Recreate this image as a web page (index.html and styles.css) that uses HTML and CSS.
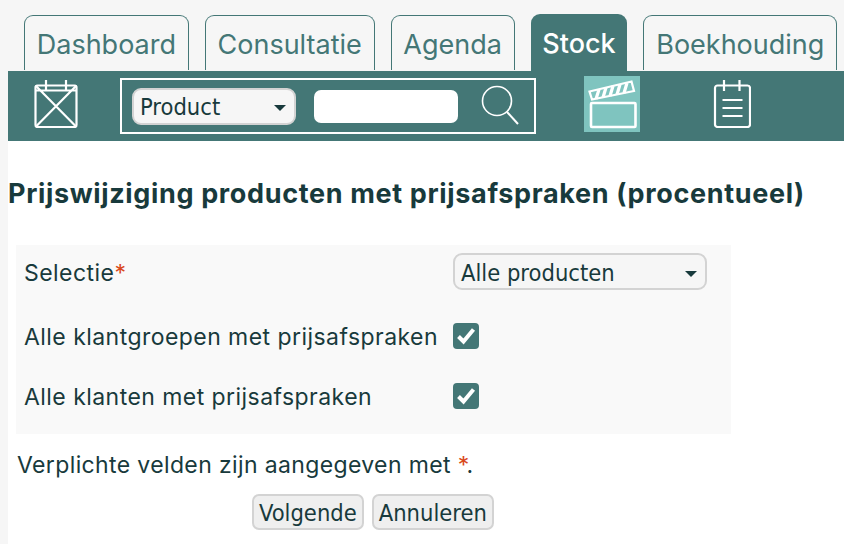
FILE: index.html
```html
<!DOCTYPE html>
<html lang="nl">
<head>
<meta charset="utf-8">
<title>Prijswijziging</title>
<link rel="stylesheet" href="styles.css">
</head>
<body>
<nav class="tabs">
  <a class="tab">Dashboard</a>
  <a class="tab">Consultatie</a>
  <a class="tab">Agenda</a>
  <a class="tab active">Stock</a>
  <a class="tab">Boekhouding</a>
</nav>
<div class="bar">
  <svg class="ico-cal" width="44" height="48" viewBox="0 0 44 48" fill="none" stroke="#fff" stroke-width="2.2">
    <rect x="1.5" y="5.500" width="41" height="41.500" rx="2"/>
    <path d="M12 0v10M32 0v10M1.500 10.500h41M1.500 5.500l41 41.500M42.500 5.500l-41 41.500"/>
  </svg>
  <div class="search">
    <div class="pick pick-bar"><span>Product</span><i class="caret"></i></div>
    <div class="field"></div>
    <svg class="ico-search" width="38" height="42" viewBox="0 0 38 42" fill="none" stroke="#fff" stroke-width="1.600">
      <circle cx="16" cy="16" r="14.500"/>
      <path d="M26 27l11 12" stroke-width="2"/>
    </svg>
  </div>
  <div class="tile">
    <svg width="56" height="56" viewBox="0 0 56 56" fill="none" stroke="#fff" stroke-width="2.600">
      <rect x="7" y="27" width="44.500" height="24" rx="1"/>
      <path d="M5.500 15.500L47.500 5.500l2.500 9.500-42 8.500z" stroke-width="2.200"/>
      <path d="M12 23l3-9.500M19 21.500l3-10M26 20l3-10M33 18.500l3-10M40 17l3-10" stroke-width="3.200"/>
    </svg>
  </div>
  <svg class="ico-note" width="38" height="48" viewBox="0 0 38 48" fill="none" stroke="#fff" stroke-width="2.200">
    <rect x="2" y="5.500" width="35" height="41.500" rx="2.500"/>
    <path d="M11 0v11M26.500 0v11M9.500 20h20M9.500 28h20M9.500 36h20"/>
  </svg>
</div>
<main class="content">
  <h1 class="title">Prijswijziging producten met prijsafspraken (procentueel)</h1>
  <div class="form">
    <div class="row row-first">
      <div class="label">Selectie<span class="req">*</span></div>
      <div class="pick pick-form"><span>Alle producten</span><i class="caret"></i></div>
    </div>
    <div class="row row-second">
      <div class="label">Alle klantgroepen met prijsafspraken</div>
      <div class="check"><svg width="20" height="18" viewBox="0 0 20 18" fill="none" stroke="#fff" stroke-width="4"><path d="M2.500 9.500l5 5L17.500 2.500"/></svg></div>
    </div>
    <div class="row row-third">
      <div class="label">Alle klanten met prijsafspraken</div>
      <div class="check"><svg width="20" height="18" viewBox="0 0 20 18" fill="none" stroke="#fff" stroke-width="4"><path d="M2.500 9.500l5 5L17.500 2.500"/></svg></div>
    </div>
  </div>
  <p class="note">Verplichte velden zijn aangegeven met <span class="req">*</span>.</p>
  <div class="actions">
    <button class="btn" type="button">Volgende</button>
    <button class="btn" type="button">Annuleren</button>
  </div>
</main>
</body>
</html>
```
FILE: styles.css
```css
* { box-sizing: border-box; }
html, body { margin: 0; padding: 0; }
body {
  width: 844px;
  height: 544px;
  overflow: hidden;
  background: #f6f6f6;
  font-family: Inter, "Liberation Sans", sans-serif;
  color: #183a3c;
}
.tabs {
  display: flex;
  align-items: flex-end;
  gap: 16px;
  height: 71px;
  padding-left: 24px;
}
.tab {
  height: 55px;
  margin-bottom: 1px;
  padding: 12px 11.750px 0;
  border: 1.500px solid #447776;
  border-bottom: 0;
  border-radius: 9px 9px 0 0;
  font-size: 27px;
  line-height: 34px;
  color: #447776;
}
.tab.active {
  height: 57px;
  margin-bottom: 0;
  border: 0;
  background: #447776;
  color: #fff;
  font-weight: 500;
  padding-top: 13px;
}
.bar {
  display: flex;
  align-items: center;
  height: 70px;
  margin-left: 8px;
  background: #447776;
}
.ico-cal { margin-left: 26px; margin-top: -4px; }
.search {
  display: flex;
  align-items: center;
  width: 416px;
  height: 56px;
  margin-left: 42px;
  padding-left: 10px;
  border: 2px solid #fff;
}
.pick {
  position: relative;
  display: flex;
  align-items: center;
  padding-top: 2px;
  border: 2px solid #d3d3d3;
  border-radius: 9px;
  background: #f6f6f6;
  font-family: "DejaVu Sans", sans-serif;
  font-stretch: condensed;
  color: #183a3c;
}
.pick-bar {
  width: 164px;
  height: 37px;
  padding-left: 6px;
  font-size: 23.500px;
}
.caret {
  position: absolute;
  right: 8px;
  top: 50%;
  margin-top: -1px;
  border-top: 6px solid #183a3c;
  border-left: 6px solid transparent;
  border-right: 6px solid transparent;
}
.field {
  width: 144px;
  height: 33px;
  margin-left: 18px;
  border-radius: 7px;
  background: #fff;
}
.ico-search { margin-left: 23px; }
.tile {
  display: flex;
  align-items: center;
  justify-content: center;
  width: 56px;
  height: 56px;
  margin-left: 48px;
  margin-top: -4px;
  background: #7fc4bf;
}
.ico-note { margin-left: 73px; margin-top: -4px; }
.content {
  height: 403px;
  margin-left: 8px;
  background: #fff;
}
.title {
  margin: 0;
  padding-top: 37px;
  font-size: 27px;
  line-height: 32px;
  font-weight: 700;
  letter-spacing: .65px;
}
.form {
  display: flex;
  flex-direction: column;
  width: 715px;
  height: 189px;
  margin: 35px 0 0 8px;
  padding-left: 8px;
  background: #f9f9f9;
}
.row { display: flex; align-items: center; }
.row-first { height: 37px; margin-top: 8px; }
.row-second { height: 26px; margin-top: 33px; }
.row-third { height: 26px; margin-top: 34px; }
.label {
  width: 429px;
  padding-top: 2px;
  font-size: 23px;
  line-height: 26px;
  letter-spacing: .45px;
}
.req { color: #d9481c; }
.pick-form {
  width: 254px;
  height: 37px;
  padding-left: 6px;
  font-size: 23.500px;
}
.check {
  display: flex;
  align-items: center;
  justify-content: center;
  width: 26px;
  height: 26px;
  border-radius: 4px;
  background: #447776;
}
.note {
  margin: 18px 0 0 9px;
  font-size: 23px;
  line-height: 26px;
  letter-spacing: .37px;
}
.actions {
  display: flex;
  gap: 8px;
  margin: 16px 0 0 244px;
}
.btn {
  height: 36px;
  padding: 2px 5px 0;
  border: 2px solid #d3d3d3;
  border-radius: 7px;
  background: #efefef;
  font-family: "DejaVu Sans", sans-serif;
  font-stretch: condensed;
  font-size: 23.500px;
  color: #183a3c;
}
```
